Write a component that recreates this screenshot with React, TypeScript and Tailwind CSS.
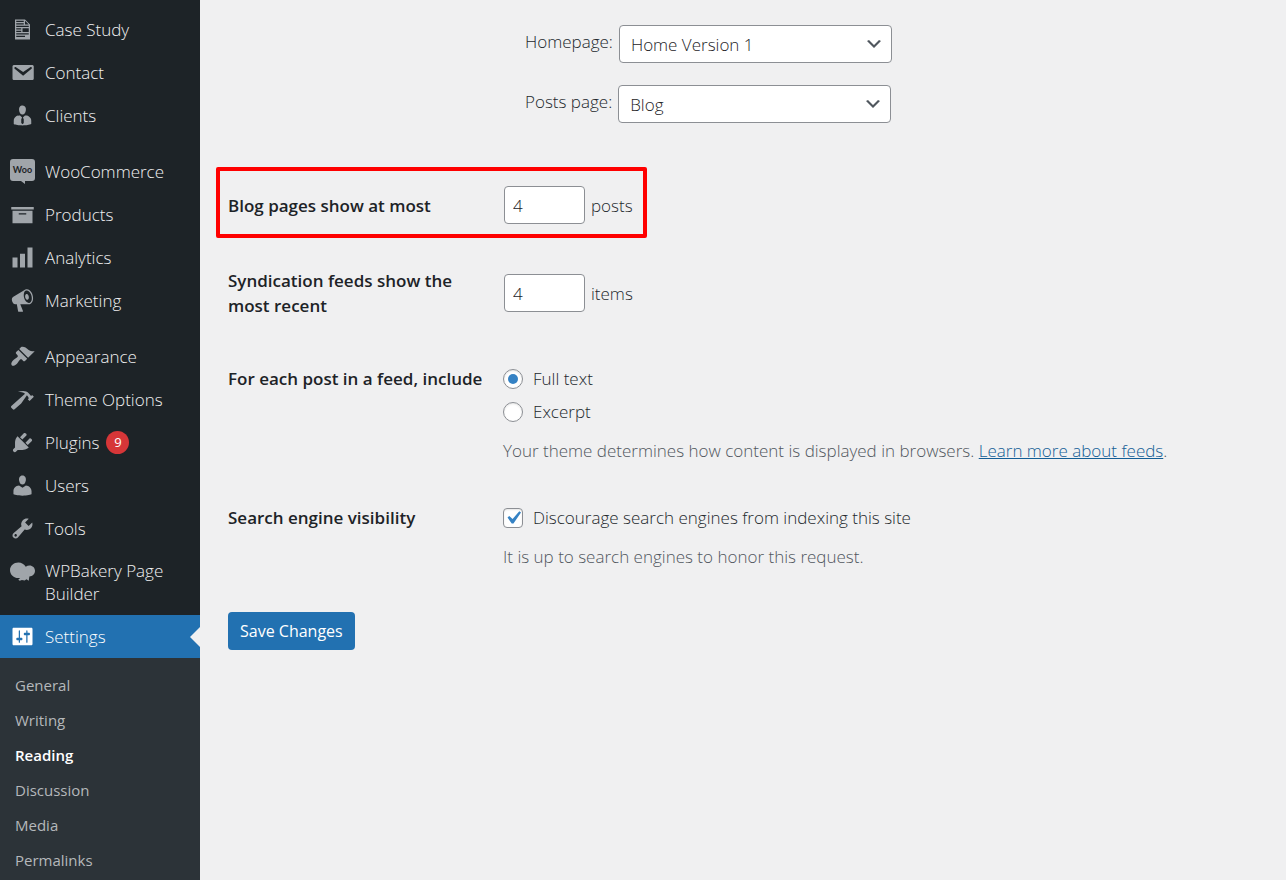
import { Fragment, useState } from 'react';
import { clsx } from 'clsx';

const icons = {
  document:
    'M12 2l4 4v12H4V2h8zM5 3v1h6V3H5zm7 3h3l-3-3v3zM5 5v1h6V5H5zm10 3V7H5v1h10zM5 9v1h4V9H5zm10 3V9h-5v3h5zM5 11v1h4v-1H5zm10 3v-1H5v1h10zm-3 2v-1H5v1h7z',
  email:
    'M3.5 4h14C18.4 4 19 4.4 19 5.2v9.6c0 .8-.6 1.2-1.5 1.2h-14C2.6 16 2 15.6 2 14.8V5.2C2 4.4 2.6 4 3.5 4zm6.99 8.6l6.74-5.53c.24-.2.43-.66.13-1.07-.29-.41-.82-.42-1.17-.17l-5.7 3.86L4.8 5.83c-.35-.25-.88-.24-1.17.17-.3.41-.11.87.13 1.07z',
  businessman:
    'M7.3 6l-.03-.19c-.04-.37-.05-.73-.03-1.08.02-.36.1-.71.25-1.04.14-.32.31-.61.52-.86s.49-.46.83-.6c.34-.15.72-.23 1.13-.23.69 0 1.26.2 1.71.59s.76.87.91 1.44.18 1.16.09 1.78l-.03.19c-.01.09-.05.25-.11.48-.05.24-.12.47-.2.69-.08.21-.19.45-.34.72-.14.27-.3.49-.47.69-.18.19-.4.34-.67.48-.27.13-.55.19-.86.19s-.59-.06-.87-.19c-.26-.13-.49-.29-.67-.5-.18-.2-.34-.42-.49-.66-.15-.25-.26-.49-.34-.73-.09-.25-.16-.47-.21-.67-.06-.21-.1-.37-.12-.5zm9.2 6.24c.41.7.5 1.41.5 2.14v2.49c0 .03-.12.08-.29.13-.18.04-.42.13-.97.27-.55.12-1.1.24-1.65.34s-1.19.19-1.95.27c-.75.08-1.46.12-2.13.12-.68 0-1.39-.04-2.14-.12-.75-.07-1.4-.17-1.98-.27-.58-.11-1.08-.23-1.56-.34-.49-.11-.8-.21-1.06-.29L3 16.87v-2.49c0-.75.07-1.46.46-2.15s.81-1.25 1.5-1.68C5.66 10.12 7.19 10 8 10l1.67 1.67L9 13v3l1.02 1.08L11 16v-3l-.68-1.33L11.97 10c.77 0 2.2.07 2.9.52.71.45 1.21 1.02 1.63 1.72z',
  archive: 'M19 4v2H1V4h18zM2 7h16v10H2V7zm11 3V9H7v1h6z',
  chart: 'M18 18V2h-4v16h4zm-6 0V7H8v11h4zm-6 0v-8H2v8h4z',
  megaphone:
    'M18.15 5.94c.46 1.62.38 3.22-.02 4.48-.42 1.28-1.26 2.18-2.3 2.48-.16.06-.26.06-.4.06-.06.02-.12.02-.18.02-.06.02-.14.02-.22.02h-6.8l2.22 5.5c.02.14-.06.26-.14.34-.08.1-.24.16-.34.16H6.95c-.1 0-.26-.06-.34-.16-.08-.08-.16-.2-.14-.34l-1-5.5H4.25l-.02-.02c-.5.06-1.08-.18-1.54-.62s-.88-1.08-1.06-1.88c-.24-.8-.2-1.56-.02-2.2.18-.62.58-1.08 1.06-1.3l.02-.02 9-5.4c.1-.06.18-.1.24-.16.06-.04.14-.08.24-.12.16-.08.28-.12.5-.18 1.04-.3 2.24.1 3.22.98s1.84 2.24 2.26 3.86zm-2.58 5.98h-.02c.4-.1.74-.34 1.04-.7.58-.7.86-1.76.86-3.04 0-.64-.1-1.3-.28-1.98-.34-1.36-1.02-2.5-1.78-3.24s-1.68-1.1-2.46-.88c-.82.22-1.4.96-1.7 2-.32 1.04-.28 2.36.06 3.72.38 1.36 1 2.5 1.8 3.24.78.74 1.62 1.1 2.48.88zm-2.54-7.08c.22-.04.42-.02.62.04.38.16.76.48 1.02 1s.42 1.2.42 1.78c0 .3-.04.56-.12.8-.18.48-.44.84-.86.94-.34.1-.8-.06-1.14-.4s-.64-.86-.78-1.5c-.18-.62-.12-1.24.02-1.72s.48-.84.82-.94z',
  brush:
    'M14.48 11.06L7.41 3.99l1.5-1.5c.5-.56 2.3-.47 3.51.32 1.21.8 1.43 1.28 2.91 2.1 1.18.64 2.45 1.26 4.45.85zm-.71.71L6.7 4.7 4.93 6.47c-.39.39-.39 1.02 0 1.41l1.06 1.06c.39.39.39 1.03 0 1.42-.6.6-1.43 1.11-2.21 1.69-.35.26-.7.53-1.01.84C1.43 14.23.4 16.08 1.4 17.07c.99 1 2.84-.03 4.18-1.36.31-.31.58-.66.85-1.02.57-.78 1.08-1.61 1.69-2.21.39-.39 1.02-.39 1.41 0l1.06 1.06c.39.39 1.02.39 1.41 0z',
  hammer:
    'M17.7 6.32l1.41 1.42-3.47 3.41-1.42-1.42.84-.82c-.32-.76-.81-1.57-1.51-2.31l-4.61 6.59-5.26 4.7c-.39.39-1.02.39-1.42 0l-1.2-1.21c-.39-.39-.39-1.02 0-1.41l10.97-9.92c-1.37-.86-3.21-1.46-5.67-1.48 2.7-.82 4.95-.93 6.58-.3 1.7.66 2.82 2.2 3.91 3.58z',
  plug:
    'M13.11 4.36L9.87 7.6 8 5.73l3.24-3.24c.35-.34 1.05-.2 1.56.32.52.51.66 1.21.31 1.55zm-8 1.77l.91-1.12 9.01 9.01-1.19.84c-.71.71-2.63 1.16-3.82 1.16H6.14L4.9 17.26c-.59.59-1.54.59-2.12 0-.59-.58-.59-1.53 0-2.12l1.24-1.24v-3.88c0-1.13.4-3.19 1.09-3.89zm7.26 3.97l3.24-3.24c.34-.35 1.04-.21 1.55.31.52.51.66 1.21.31 1.55l-3.24 3.25z',
  user:
    'M10 9.25c-2.27 0-2.73-3.44-2.73-3.44C7 4.02 7.82 2 9.97 2c2.16 0 2.98 2.02 2.71 3.81 0 0-.41 3.44-2.68 3.44zm0 2.57L12.72 10c2.39 0 4.52 2.33 4.52 4.53v2.49s-3.65 1.13-7.24 1.13c-3.65 0-7.24-1.13-7.24-1.13v-2.49c0-2.25 1.94-4.48 4.47-4.48z',
  wrench:
    'M16.68 9.77c-1.34 1.34-3.3 1.67-4.95.99l-5.41 6.52c-.99.99-2.59.99-3.58 0s-.99-2.59 0-3.57l6.52-5.42c-.68-1.65-.35-3.61.99-4.95 1.28-1.28 3.12-1.62 4.72-1.06l-2.89 2.89 2.82 2.82 2.86-2.87c.53 1.58.18 3.39-1.08 4.65zM3.81 16.21c.4.39 1.04.39 1.43 0 .4-.4.4-1.04 0-1.43-.39-.4-1.03-.4-1.43 0-.39.39-.39 1.03 0 1.43z',
  sliders:
    'M18 16V4c0-.55-.45-1-1-1H3c-.55 0-1 .45-1 1v12c0 .55.45 1 1 1h14c.55 0 1-.45 1-1zM8 11h1c.55 0 1 .45 1 1s-.45 1-1 1H8v1.5c0 .28-.22.5-.5.5s-.5-.22-.5-.5V13H6c-.55 0-1-.45-1-1s.45-1 1-1h1V5.5c0-.28.22-.5.5-.5s.5.22.5.5V11zm5-2h-1c-.55 0-1-.45-1-1s.45-1 1-1h1V5.5c0-.28.22-.5.5-.5s.5.22.5.5V7h1c.55 0 1 .45 1 1s-.45 1-1 1h-1v5.5c0 .28-.22.5-.5.5s-.5-.22-.5-.5V9z',
  bakery:
    'M6.7 2.8c2.5 0 4.7 1.3 5.9 3.3.9-.7 1.9-1 3-1 2.5 0 4.4 1.9 4.4 4.3 0 2.5-2 4.5-4.5 4.6l-.5 3.3-1.8-1.1-1.5.9-2.2-.3-1.7.6-1.2-.8 1.5-1.5c-.5.1-.9.1-1.4.1C3 15.2 0 12.4 0 8.9c0-3.4 3-6.1 6.7-6.1z',
};

type IconName = keyof typeof icons | 'woo';

interface MenuEntry {
  label: string;
  icon: IconName;
  badge?: number;
}

const menuGroups: MenuEntry[][] = [
  [
    { label: 'Case Study', icon: 'document' },
    { label: 'Contact', icon: 'email' },
    { label: 'Clients', icon: 'businessman' },
  ],
  [
    { label: 'WooCommerce', icon: 'woo' },
    { label: 'Products', icon: 'archive' },
    { label: 'Analytics', icon: 'chart' },
    { label: 'Marketing', icon: 'megaphone' },
  ],
  [
    { label: 'Appearance', icon: 'brush' },
    { label: 'Theme Options', icon: 'hammer' },
    { label: 'Plugins', icon: 'plug', badge: 9 },
    { label: 'Users', icon: 'user' },
    { label: 'Tools', icon: 'wrench' },
    { label: 'WPBakery Page Builder', icon: 'bakery' },
    { label: 'Settings', icon: 'sliders' },
  ],
];

const submenu = ['General', 'Writing', 'Reading', 'Discussion', 'Media', 'Permalinks'];

const MenuIcon = ({ name }: { name: IconName }) => {
  if (name === 'woo') {
    return (
      <svg viewBox="0 0 25 25" className="size-[25px]" aria-hidden="true">
        <path d="M3 0h19a3 3 0 0 1 3 3v16a3 3 0 0 1-3 3h-7v3l-4-3H3a3 3 0 0 1-3-3V3a3 3 0 0 1 3-3z" fill="currentColor" />
        <text x="12.5" y="14" textAnchor="middle" fontFamily="Lato, sans-serif" fontSize="9" fontWeight="700" fill="#1d2327">
          Woo
        </text>
      </svg>
    );
  }
  return (
    <svg viewBox="0 0 20 20" className="size-[25px]" fill="currentColor" fillRule="evenodd" aria-hidden="true">
      <path d={icons[name]} />
    </svg>
  );
};

const MenuItem = ({ label, icon, badge }: MenuEntry) => {
  const active = label === 'Settings';
  return (
    <a
      href="#"
      className={clsx(
        'relative flex min-h-[43px] items-center py-[9px] text-[17px] leading-[23px]',
        active ? 'mt-px bg-[#2271b1] text-white' : 'text-[#f0f0f1] hover:text-[#72aee6]'
      )}
    >
      <span className={clsx('flex w-[45px] shrink-0 justify-center self-start', active ? 'text-white' : 'text-[#a0a5aa]')}>
        <MenuIcon name={icon} />
      </span>
      <span>{label}</span>
      {badge && (
        <span className="ml-[7px] flex size-[23px] items-center justify-center rounded-full bg-[#d63638] text-[13px] font-normal text-white">
          {badge}
        </span>
      )}
      {active && (
        <span className="absolute right-0 top-1/2 -translate-y-1/2 border-y-10 border-r-10 border-y-transparent border-r-[#f0f0f1]" />
      )}
    </a>
  );
};

const Sidebar = () => (
  <nav className="flex w-[200px] shrink-0 flex-col bg-[#1d2327] pt-2">
    {menuGroups.map((group, index) => (
      <Fragment key={index}>
        {index > 0 && <div className="h-[13px]" />}
        <div className="flex flex-col font-[350]">
          {group.map((item) => (
            <MenuItem key={item.label} {...item} />
          ))}
        </div>
      </Fragment>
    ))}
    <ul className="flex-1 bg-[#2c3338] pt-[10px]">
      {submenu.map((item) => (
        <li key={item}>
          <a
            href="#"
            className={clsx(
              'block px-[15px] text-[15px] leading-[35px]',
              item === 'Reading' ? 'font-semibold text-white' : 'text-[#b5b8bb] hover:text-[#72aee6]'
            )}
          >
            {item}
          </a>
        </li>
      ))}
    </ul>
  </nav>
);

interface PageSelectProps {
  id: string;
  label: string;
  options: string[];
}

const PageSelect = ({ id, label, options }: PageSelectProps) => (
  <div className="flex items-center gap-[6px]">
    <label htmlFor={id} className="pb-[6px]">
      {label}
    </label>
    <div className="relative w-[273px]">
      <select
        id={id}
        className="h-[38px] w-full appearance-none rounded-[4px] border border-[#8c8f94] bg-white pl-[11px] pr-8 text-[#1d2327]"
      >
        {options.map((option) => (
          <option key={option}>{option}</option>
        ))}
      </select>
      <svg
        viewBox="0 0 20 20"
        className="pointer-events-none absolute right-2 top-1/2 size-5 -translate-y-1/2"
        fill="#50575e"
        aria-hidden="true"
      >
        <path d="M5 6l5 5 5-5 2 1-7 7-7-7 2-1z" />
      </svg>
    </div>
  </div>
);

const App = () => {
  const [postsPerPage, setPostsPerPage] = useState('4');
  const [feedItems, setFeedItems] = useState('4');
  const [feedContent, setFeedContent] = useState('Full text');
  const [discourage, setDiscourage] = useState(true);

  const numberInput =
    'h-[38px] w-[81px] rounded-[4px] border border-[#8c8f94] bg-white px-2 text-[#1d2327] [appearance:textfield]';
  const row = 'relative grid grid-cols-[275px_1fr]';
  const heading = 'pr-5 font-[550] text-[#1d2327]';

  return (
    <div className="flex min-h-screen bg-[#f0f0f1] font-['Open_Sans','Noto_Sans',sans-serif] text-[17px] leading-[25px] text-[#23282d]">
      <Sidebar />
      <main className="flex-1 pl-7 pr-5 font-light">
        <form onSubmit={(e) => e.preventDefault()}>
          <div className="flex flex-col gap-[22px] pl-[297px] pt-[25px]">
            <PageSelect id="homepage" label="Homepage:" options={['Home Version 1', 'Home Version 2']} />
            <PageSelect id="posts-page" label="Posts page:" options={['Blog', 'Contact']} />
          </div>

          <div className={clsx(row, 'mt-[63px] items-center')}>
            <label htmlFor="posts-per-page" className={heading}>
              Blog pages show at most
            </label>
            <div className="flex items-center gap-[6px] pl-px">
              <input
                id="posts-per-page"
                type="number"
                value={postsPerPage}
                onChange={(e) => setPostsPerPage(e.target.value)}
                className={numberInput}
              />
              posts
            </div>
            <div className="pointer-events-none absolute -left-3 -top-[19px] h-[71px] w-[431px] rounded-[2px] border-4 border-[#ff0000]" />
          </div>

          <div className={clsx(row, 'mt-[44px] items-center')}>
            <label htmlFor="feed-items" className={heading}>
              Syndication feeds show the most recent
            </label>
            <div className="flex items-center gap-[6px] pl-px">
              <input
                id="feed-items"
                type="number"
                value={feedItems}
                onChange={(e) => setFeedItems(e.target.value)}
                className={numberInput}
              />
              items
            </div>
          </div>

          <div role="radiogroup" aria-labelledby="feed-content" className={clsx(row, 'mt-12')}>
            <div id="feed-content" className={heading}>
              For each post in a feed, include
            </div>
            <div>
              <div className="flex flex-col gap-2">
                {['Full text', 'Excerpt'].map((option) => (
                  <label key={option} className="flex items-center gap-[10px]">
                    <input
                      type="radio"
                      name="feed-content"
                      checked={feedContent === option}
                      onChange={() => setFeedContent(option)}
                      className="flex size-5 appearance-none items-center justify-center rounded-full border border-[#8c8f94] bg-white shadow-[inset_0_1px_2px_rgba(0,0,0,0.1)] before:size-[10px] before:rounded-full checked:before:bg-[#3582c4]"
                    />
                    {option}
                  </label>
                ))}
              </div>
              <p className="mt-[14px] text-[#50575e]">
                Your theme determines how content is displayed in browsers.{' '}
                <a href="#" className="text-[#135e96] underline">
                  Learn more about feeds
                </a>
                .
              </p>
            </div>
          </div>

          <div className={clsx(row, 'mt-[42px]')}>
            <div className={heading}>Search engine visibility</div>
            <div>
              <label className="flex items-center gap-[10px]">
                <span className="relative size-5">
                  <input
                    type="checkbox"
                    checked={discourage}
                    onChange={(e) => setDiscourage(e.target.checked)}
                    className="block size-5 appearance-none rounded-[4px] border border-[#8c8f94] bg-white shadow-[inset_0_1px_2px_rgba(0,0,0,0.1)]"
                  />
                  {discourage && (
                    <svg viewBox="0 0 20 20" className="pointer-events-none absolute -inset-[3px]" fill="#3582c4" aria-hidden="true">
                      <path d="M14.83 4.89l1.34.94-5.81 8.38H9.02L5.78 9.67l1.34-1.25 2.57 2.4z" />
                    </svg>
                  )}
                </span>
                Discourage search engines from indexing this site
              </label>
              <p className="mt-[14px] text-[#50575e]">It is up to search engines to honor this request.</p>
            </div>
          </div>

          <button type="submit" className="mt-[43px] h-[38px] rounded-[4px] bg-[#2271b1] px-3 text-[16px] font-normal text-white">
            Save Changes
          </button>
        </form>
      </main>
    </div>
  );
};

export default App;
